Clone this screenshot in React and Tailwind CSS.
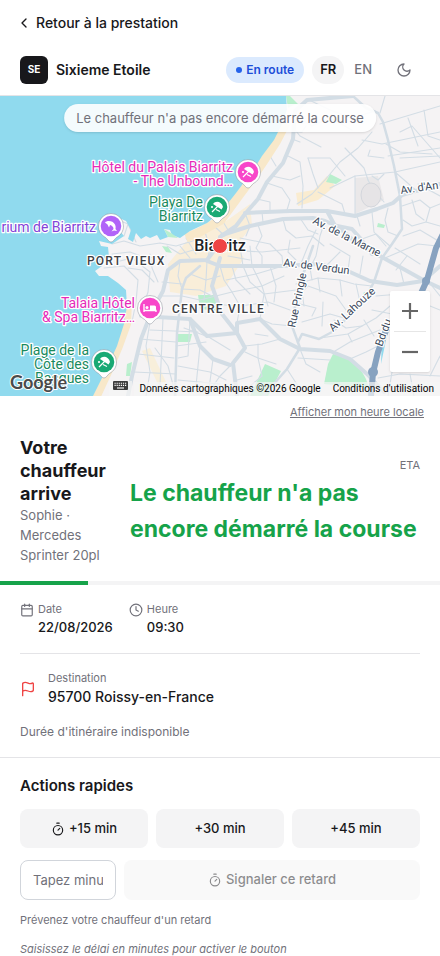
import React, { useState } from 'react';
import { Calendar, ChevronLeft, Clock, Flag, Timer } from 'lucide-react';

const LANGS = ['FR', 'EN'];
const QUICK_DELAYS = [15, 30, 45];

// Street network, drawn on a 440 x 300 canvas
const MINOR_STREETS = [
  // north-east
  'M307 3 L330 14 L352 22 L375 15', 'M385 0 L380 17', 'M380 28 L440 10', 'M372 36 L358 52 L340 66 L325 84 L312 98 L297 108',
  'M292 30 L300 40 L321 51', 'M296 20 L312 30 L330 22 L352 34', 'M345 52 L364 72 L368 84', 'M308 62 L330 62 L345 80',
  'M308 62 L313 78 L318 92', 'M288 60 L300 66 L303 90 L302 112', 'M330 92 L355 80 L395 76 L440 66', 'M355 80 L355 118',
  'M318 96 L342 108 L345 118', 'M362 44 L382 48 L440 36', 'M386 48 L400 56 L432 58', 'M400 36 L412 30 L440 62', 'M408 22 L418 50',
  'M388 60 L440 52', 'M395 76 L418 96', 'M368 84 L372 92 L384 106', 'M372 80 L378 84 L384 78', 'M400 62 L440 60', 'M424 14 L428 40 L440 44',
  'M267 87 L282 92 L290 104 L287 114', 'M272 80 L290 84 L300 80', 'M257 103 L270 106 L270 115', 'M276 70 L270 60 L276 50', 'M292 43 L300 46', 'M293 36 L302 36 L306 30',
  'M402 110 L420 104 L430 112 L426 126 L412 130 L403 124', 'M412 104 L416 118 L424 124', 'M430 112 L440 108', 'M426 126 L440 130', 'M403 140 L420 134 L440 146',
  'M388 112 L385 124 L388 136 L398 140', 'M372 116 L374 136 L386 150', 'M357 120 L360 130', 'M418 88 L440 100', 'M370 54 L368 60 L384 62',
  // centre
  'M245 117 L250 130 L246 140', 'M262 116 L263 126', 'M283 123 L286 134 L296 142 L312 140 L324 150', 'M258 129 L262 140 L256 152 L262 160 L262 170',
  'M240 142 L270 148 L282 160 L283 170', 'M300 122 L308 134 L318 138', 'M316 134 L308 150 L300 170', 'M324 128 L320 140 L316 160 L310 172',
  'M290 144 L288 156 L296 164', 'M225 154 L262 156 L300 152', 'M240 150 L243 170', 'M250 150 L252 170', 'M228 160 L250 164',
  'M330 148 L350 160 L348 174', 'M340 156 L326 170', 'M362 143 L376 138 L390 150', 'M363 160 L360 178', 'M400 172 L404 188',
  'M385 162 L418 148 L437 150', 'M395 152 L420 168', 'M407 160 L396 174',
  // left peninsula and port vieux
  'M112 148 L124 145 L140 150 L160 147 L176 150 L196 144', 'M112 158 L130 156 L146 162 L166 160', 'M104 172 L124 170 L138 184 L136 206 L132 226',
  'M116 166 L132 162 L150 176 L148 196 L142 214', 'M128 128 L124 140', 'M118 124 L128 128 L136 146', 'M150 158 L152 172 L158 186', 'M128 172 L142 174 L154 186',
  'M180 150 L190 162', 'M167 150 L180 158 L200 152', 'M186 142 L196 158', 'M205 136 L210 152 L207 165', 'M196 144 L216 152', 'M225 140 L214 130', 'M228 134 L222 124',
  'M160 200 L182 200 L200 204 L232 196', 'M180 165 L178 180 L182 193', 'M190 178 L206 184 L220 180', 'M207 165 L206 184 L204 204', 'M182 193 L200 194 L212 200', 'M162 186 L182 188',
  'M220 170 L224 184 L232 196 L240 210 L237 227', 'M232 170 L236 184 L250 198', 'M243 170 L250 186 L264 198 L260 223', 'M226 184 L256 178 L283 170', 'M232 196 L262 190 L284 180',
  'M252 170 L262 190 L268 210', 'M270 170 L276 190 L274 206', 'M210 208 L240 210 L268 206 L290 214', 'M264 198 L296 194',
  'M296 188 L318 182 L340 184 L342 200', 'M318 182 L320 196', 'M310 172 L312 184', 'M304 210 L302 196 L308 190 L336 200 L346 214', 'M323 206 L322 230',
  'M300 208 L316 212 L312 220', 'M340 184 L354 188 L372 190', 'M356 188 L360 206', 'M302 226 L330 218 L344 222',
  // south
  'M150 226 L146 250 L150 276 L146 300', 'M140 243 L176 246', 'M138 258 L174 262', 'M134 276 L176 278', 'M150 234 L198 236', 'M163 222 L160 290', 'M190 223 L188 260 L178 262',
  'M176 250 L206 246', 'M178 270 L210 276 L226 284', 'M200 250 L196 290', 'M178 284 L220 288', 'M213 263 L208 300', 'M155 252 L168 270 L176 300', 'M184 232 L206 240',
  'M207 240 L230 254', 'M245 250 L262 248 L280 243', 'M245 256 L258 262 L262 280', 'M258 248 L258 262 L276 268', 'M262 280 L250 290 L248 300', 'M233 267 L220 280 L206 300', 'M237 284 L252 280',
  'M260 223 L272 228 L292 230', 'M255 238 L268 240', 'M300 253 L306 268 L320 276', 'M320 242 L348 238 L376 222 L390 210', 'M335 255 L350 246 L380 234', 'M348 238 L352 246',
  'M350 263 L366 256 L378 250', 'M364 224 L374 240', 'M372 214 L392 218', 'M376 200 L400 198', 'M287 273 L298 290 L316 296', 'M298 262 L330 264',
  'M378 282 L400 278 L440 280', 'M392 276 L388 300', 'M410 278 L414 300', 'M440 260 L430 280', 'M432 190 L440 200', 'M430 210 L440 214', 'M334 224 L346 232 L362 230',
];

const MAIN_STREETS = [
  'M353 0 L366 12 L378 17 L383 26 L388 44 L394 70 L400 100 L402 133 L392 148 L382 162 L374 186 L362 208 L332 236 L319 243 L302 238 L298 246',
  'M313 150 L304 176 L296 204 L292 230 L300 252 L287 273 L263 300',
  'M182 193 L177 237 L175 300',
  'M200 170 L186 182 L182 193',
];

const ARTERIES = [
  'M353 0 L330 2 L307 4 L295 15 L293 43 L283 67 L267 86 L258 103 L245 118 L236 130 L220 141',
  'M245 117 L290 115 L327 115 L355 120 L377 113 L393 107 L402 99 L440 88',
  'M222 139 L250 130 L283 123 L313 122 L325 125 L337 130 L352 133 L360 142 L372 158',
  'M327 115 L334 128',
  'M337 130 L360 150 L380 160 L407 175 L425 185 L440 192',
  'M207 165 L220 170 L283 170 L318 168 L350 176 L370 185 L397 189 L423 185 L440 170',
  'M128 300 L132 280 L141 243 L151 217 L163 195 L168 174 L180 165 L207 164 L216 152',
  'M141 220 L190 223 L207 240 L237 237 L237 227 L260 223 L280 243 L300 253 L330 255 L350 263 L367 278 L384 296',
  'M190 223 L200 250 L213 263 L230 269',
  'M220 162 L212 190 L222 218 L237 237 L245 252 L233 267 L237 300',
];

const HIGHWAY = 'M445 134 L436 152 L427 184 L418 204 L404 220 L386 234 L378 256 L373 277 L371 300';

function Pin({ x, y, color, children }) {
  return (
    <g transform={`translate(${x} ${y})`}>
      <path
        d="M0 16 C-2 16 -3.500 13.200 -5.500 11.400 C-10 9 -12.500 5 -12.500 0 A12.500 12.500 0 0 1 12.500 0 C12.500 5 10 9 5.500 11.400 C3.500 13.200 2 16 0 16Z"
        fill="#fff"
        stroke="#6b7280"
        strokeOpacity="0.5"
        strokeWidth="0.8"
      />
      <circle r="10.300" fill={color} />
      {children}
    </g>
  );
}

function BeachIcon() {
  return (
    <g>
      <path d="M-4 -3 C-1 -7 5 -5 6 0 L4.500 2.500 L-4 -3Z" fill="#fff" />
      <path d="M1 -1 L-5 5 M-1 2.500 L3 4.500" stroke="#fff" strokeWidth="1.200" />
      <circle cx="-5" cy="0" r="1.100" fill="#fff" />
    </g>
  );
}

// Older, rounder crescent than the one the icon set ships now
function MoonIcon() {
  return (
    <svg width="16" height="16" viewBox="0 0 24 24" fill="none" stroke="currentColor" strokeWidth="2" strokeLinecap="round" strokeLinejoin="round" aria-hidden="true">
      <path d="M12 3a6 6 0 0 0 9 9 9 9 0 1 1-9-9Z" />
    </svg>
  );
}

function Label({ x, y, lines, color, anchor = 'end' }) {
  return (
    <text
      textAnchor={anchor}
      fill={color}
      stroke="#fff"
      strokeWidth="2.500"
      strokeLinejoin="round"
      paintOrder="stroke"
      className="font-[Roboto,sans-serif] text-[14px]"
    >
      {lines.map((line, i) => (
        <tspan key={line} x={x} y={y + i * 14}>{line}</tspan>
      ))}
    </text>
  );
}

function StreetName({ x, y, angle, children }) {
  return (
    <text
      transform={`translate(${x} ${y}) rotate(${angle})`}
      fill="#3c4a5c"
      stroke="#fff"
      strokeWidth="2.500"
      strokeLinejoin="round"
      paintOrder="stroke"
      className="font-[Roboto,sans-serif] text-[11px]"
    >
      {children}
    </text>
  );
}

function District({ x, y, children }) {
  return (
    <text
      x={x}
      y={y}
      fill="#3f4145"
      stroke="#fff"
      strokeWidth="2.500"
      strokeLinejoin="round"
      paintOrder="stroke"
      className="font-[Roboto,sans-serif] text-[12px] font-medium tracking-widest"
    >
      {children}
    </text>
  );
}

function MapDrawing() {
  return (
    <svg viewBox="0 0 440 300" preserveAspectRatio="xMidYMid slice" className="absolute inset-0 h-full w-full" role="img" aria-label="Carte de Biarritz">
      <rect width="440" height="300" fill="#f5f3f4" />

      {/* Built-up areas */}
      <g fill="#faecd0">
        <path d="M168 168 L186 146 L222 128 L250 108 L252 130 L236 150 L244 162 L226 190 L196 200 L170 196Z" opacity="0.75" />
        <path d="M296 97 L314 94 L327 80 L335 90 L318 104 L298 110Z" />
        <path d="M142 255 L150 252 L166 286 L158 288Z" opacity="0.7" />
      </g>
      <path d="M355 82 L378 80 L384 104 L355 118Z" fill="#eae8e9" />

      {/* Parks */}
      <g fill="#b9efcd">
        <path d="M286 0 L290 0 L300 10 L296 8 L288 12Z" />
        <path d="M330 78 L342 84 L336 88 L326 86Z" />
        <path d="M198 199 L218 199 L218 215 L200 213Z" />
        <path d="M178 238 L192 238 L190 246 L178 246Z" />
        <path d="M265 268 L281 275 L268 300 L250 300Z" />
        <path d="M333 258 C350 260 366 276 368 290 L368 292 L324 288 L328 268Z" />
        <path d="M378 127 L385 129 L384 132 L377 131Z" />
        <path d="M364 196 L369 197 L366 206 L361 204Z" />
        <path d="M127 268 L132 266 L130 280 L126 280Z" />
        <path d="M162 150 L168 151 L172 157 L166 156Z" />
      </g>

      <g fill="none" stroke="#d3dde5" strokeLinecap="round" strokeLinejoin="round">
        <g strokeWidth="1.100">
          {MINOR_STREETS.map((d) => <path key={d} d={d} />)}
        </g>
        <g strokeWidth="2.500">
          {MAIN_STREETS.map((d) => <path key={d} d={d} />)}
        </g>
        <g strokeWidth="4">
          {ARTERIES.map((d) => <path key={d} d={d} />)}
        </g>
      </g>
      <ellipse cx="371" cy="99" rx="10" ry="12" fill="#e6e4e6" stroke="#d3d6dc" />
      <path d="M382 238 L392 226 L386 244 L381 268Z" fill="#90daee" />
      <path d={HIGHWAY} fill="none" stroke="#87a2c0" strokeWidth="6" strokeLinejoin="round" />
      <circle cx="426" cy="185" r="4" fill="#87a2c0" />
      <circle cx="373" cy="276" r="5" fill="#87a2c0" />

      {/* Ocean, with the sand strip as its outline */}
      <path
        d="M286 27 L276 46 L263 66 L255 78 L240 98 L221 124 L200 136 L186 142"
        fill="none"
        stroke="#f8e8c9"
        strokeWidth="9"
      />
      <path d="M128 205 L127 228 L119 250 L109 274 L96 302" fill="none" stroke="#f8e8c9" strokeWidth="8" />
      <path
        d="M0 0 L286 0 L287 14 L281 30 L274 44 L262 60 L254 73 L236 97 L221 116 L207 127 L190 135 L180 142 L172 139 L170 134 L164 133 L168 141 L160 144 L157 139 L150 142 L146 140 L141 143 L136 137 L133 146 L128 143 L131 134 L126 125 L119 122 L118 133 L124 140 L112 148 L99 145 L101 150 L108 151 L109 161 L100 164 L102 170 L95 175 L99 180 L108 180 L118 187 L126 194 L127 210 L124 228 L117 250 L106 274 L93 300 L0 300Z"
        fill="#90daee"
      />
      <path d="M164 133 L171 137 L178 142 L168 141Z" fill="#b9efcd" />

      <StreetName x="401" y="98" angle="-8">Av. d'An</StreetName>
      <StreetName x="312" y="127" angle="27">Av. de la Marne</StreetName>
      <StreetName x="283" y="170" angle="7">Av. de Verdun</StreetName>
      <StreetName x="295" y="232" angle="-78">Rue Pringle</StreetName>
      <StreetName x="333" y="236" angle="-43">Av. Lahouze</StreetName>
      <StreetName x="382" y="251" angle="-70">Bd du</StreetName>

      <Label x="233" y={76} color="#e52bb9" lines={['Hôtel du Palais Biarritz', '- The Unbound…']} />
      <Label x="203" y={111} color="#188a5e" lines={['Playa De', 'Biarritz']} />
      <Label x="96" y={136} color="#8344d8" lines={['rium de Biarritz']} />
      <Label x="135" y={212} color="#e52bb9" lines={['Talaia Hôtel', '& Spa Biarritz…']} />
      <Label x="89" y={259} color="#188a5e" lines={['Plage de la', 'Côte des', 'Basques']} />

      <District x="87" y="169">PORT VIEUX</District>
      <District x="172" y="217">CENTRE VILLE</District>

      <Pin x="248" y="76" color="#f846c9"><BeachIcon /></Pin>
      <Pin x="217" y="111" color="#19a974"><BeachIcon /></Pin>
      <Pin x="104" y="266" color="#19a974"><BeachIcon /></Pin>
      <Pin x="111" y="130" color="#b163f8">
        <path d="M-6 -3.500 C-4 -6 2 -5.500 4 -1.500 C5 0.500 4.500 2 4.500 3 L6 5 L3 4.500 L0.500 5.500 L2.500 3 C2.500 1 1 -0.500 -1 -1 L-2 1.500 L-3.500 -1.500Z" fill="#fff" />
      </Pin>
      <Pin x="150" y="212" color="#f846c9">
        <path d="M-6 -4 V4 M-6 2.500 H6 V4" fill="none" stroke="#fff" strokeWidth="1.300" />
        <path d="M0 -2.500 H4.500 Q6 -2.500 6 -1 V2 H0Z" fill="#fff" />
        <circle cx="-3" cy="-0.500" r="1.500" fill="#fff" />
      </Pin>

      <text
        x="220"
        y="155"
        textAnchor="middle"
        fill="#202124"
        stroke="#fff"
        strokeWidth="2.500"
        paintOrder="stroke"
        className="font-[Roboto,sans-serif] text-[16px] font-medium"
      >
        Biarritz
      </text>
      <circle cx="220" cy="150" r="7.500" fill="#ef4444" stroke="#fff" strokeWidth="1" />
    </svg>
  );
}

function KeyboardIcon() {
  return (
    <svg width="15" height="9" viewBox="0 0 15 9" aria-hidden="true">
      <rect width="15" height="9" rx="1" fill="#3c3c3c" />
      <path d="M1.500 2.200 H13.500 M1.500 4.400 H13.500" stroke="#fff" strokeWidth="1.100" strokeDasharray="1.200 0.900" />
      <path d="M4 7 H11" stroke="#fff" strokeWidth="1.100" />
    </svg>
  );
}

function MapView() {
  return (
    <section className="relative h-[300px] overflow-hidden bg-[#90daee]">
      <MapDrawing />

      <p className="absolute left-1/2 top-2 -translate-x-1/2 whitespace-nowrap rounded-full bg-white/90 px-3 py-1 text-[13px] leading-5 text-[#71717a] shadow-sm">
        Le chauffeur n'a pas encore démarré la course
      </p>

      {/* Zoom controls */}
      <div className="absolute bottom-6 right-2.5 flex w-10 flex-col items-center rounded-xs bg-white shadow">
        <button type="button" aria-label="Zoom avant" className="flex h-10 w-10 items-center justify-center">
          <svg width="18" height="18" viewBox="0 0 18 18"><path d="M9 1 V17 M1 9 H17" stroke="#666" strokeWidth="2.200" /></svg>
        </button>
        <span className="h-px w-8 bg-[#e6e6e6]" />
        <button type="button" aria-label="Zoom arrière" className="flex h-10 w-10 items-center justify-center">
          <svg width="18" height="18" viewBox="0 0 18 18"><path d="M1 9 H17" stroke="#666" strokeWidth="2.200" /></svg>
        </button>
      </div>

      <span className="absolute bottom-0.5 left-2.5 font-[Lato,sans-serif] text-[18px] font-bold leading-6 text-[#4a4a4a] [-webkit-text-stroke:2px_white] [paint-order:stroke_fill]">
        Google
      </span>

      <div className="absolute bottom-0 right-0 flex h-3.5 items-center font-[Roboto,sans-serif] text-[10px] leading-[14px] text-black">
        <button type="button" aria-label="Raccourcis clavier" className="mr-0.5 flex h-4 items-start bg-[#f5f5f5]/70 px-1">
          <KeyboardIcon />
        </button>
        <span className="bg-[#f5f5f5]/70 px-1.5">Données cartographiques ©2026 Google</span>
        <a href="#conditions" className="bg-[#f5f5f5]/70 px-1.5">Conditions d'utilisation</a>
      </div>
    </section>
  );
}

function Header({ lang, setLang }) {
  return (
    <header className="border-b border-[#e4e4e7]">
      <div className="flex h-[46px] items-center px-4">
        <a href="#prestation" className="flex items-center gap-1 text-[14px] font-medium leading-5">
          <ChevronLeft size={16} />
          Retour à la prestation
        </a>
      </div>
      <div className="flex h-[49px] items-center px-5 pb-0.5">
        <span className="flex h-7 w-7 items-center justify-center rounded-md bg-[#18181b] text-[10px] font-bold text-white">SE</span>
        <span className="ml-2 text-[14px] font-semibold leading-5">Sixieme Etoile</span>
        <span className="ml-auto flex h-[26px] items-center gap-1 rounded-full bg-[#dbeafe] px-2.5 text-[12px] font-semibold text-[#1d4ed8]">
          <span className="h-1.5 w-1.5 rounded-full bg-[#2563eb]" />
          En route
        </span>
        <div className="ml-2 flex gap-0.5">
          {LANGS.map((code) => (
            <button
              key={code}
              type="button"
              onClick={() => setLang(code)}
              className={`h-7 rounded-full px-2 text-[13px] ${
                lang === code ? 'bg-[#f4f4f5] font-semibold text-[#18181b]' : 'font-medium text-[#71717a]'
              }`}
            >
              {code}
            </button>
          ))}
        </div>
        <button type="button" aria-label="Mode sombre" className="ml-2 flex h-8 w-8 items-center justify-center text-[#71717a]">
          <MoonIcon />
        </button>
      </div>
    </header>
  );
}

export default function App() {
  const [lang, setLang] = useState('FR');
  const [minutes, setMinutes] = useState('');

  return (
    <main className="bg-white font-[Inter,sans-serif] text-[#18181b]">
      <Header lang={lang} setLang={setLang} />
      <MapView />

      <div className="flex h-8 items-center justify-end px-4">
        <button type="button" className="text-[11px] leading-4 text-[#71717a] underline">Afficher mon heure locale</button>
      </div>

      {/* Driver and ETA */}
      <section className="flex items-center gap-3.5 px-5 pb-4 pt-2">
        <div className="w-24 shrink-0">
          <h1 className="text-[18px] font-bold leading-[23px]">Votre chauffeur arrive</h1>
          <p className="text-[13px] leading-5 text-[#71717a]">Sophie · Mercedes Sprinter 20pl</p>
        </div>
        <div className="flex-1">
          <p className="text-right text-[11px] leading-5 text-[#71717a]">ETA</p>
          <p className="text-[23px] font-bold leading-9 text-[#16a34a]">Le chauffeur n'a pas encore démarré la course</p>
        </div>
      </section>
      <div className="h-1 bg-[#f4f4f5]">
        <div className="h-full w-1/5 bg-[#16a34a]" />
      </div>

      <section className="px-5">
        <dl className="flex gap-4 border-b border-[#e4e4e7] pb-4 pt-4">
          <div className="flex gap-1">
            <Calendar size={14} className="mt-0.5 text-[#71717a]" />
            <div>
              <dt className="text-[11px] leading-4 text-[#71717a]">Date</dt>
              <dd className="text-[13px] font-medium leading-5">22/08/2026</dd>
            </div>
          </div>
          <div className="flex gap-1">
            <Clock size={14} className="mt-0.5 text-[#71717a]" />
            <div>
              <dt className="text-[11px] leading-4 text-[#71717a]">Heure</dt>
              <dd className="text-[13px] font-medium leading-5">09:30</dd>
            </div>
          </div>
        </dl>
        <div className="flex items-center gap-3 pt-4">
          <Flag size={16} className="text-[#ef4444]" />
          <div>
            <p className="text-[11px] leading-4 text-[#71717a]">Destination</p>
            <p className="text-[14px] font-medium leading-[21px]">95700 Roissy-en-France</p>
          </div>
        </div>
        <p className="pb-4 pt-4 text-[12px] leading-[18px] text-[#71717a]">Durée d'itinéraire indisponible</p>
      </section>

      <section className="border-t border-[#e4e4e7] px-5 pt-4">
        <h2 className="text-[15px] font-semibold leading-[23px]">Actions rapides</h2>
        <div className="mt-3 grid grid-cols-3 gap-2">
          {QUICK_DELAYS.map((delay, idx) => (
            <button
              key={delay}
              type="button"
              onClick={() => setMinutes(String(delay))}
              className="flex h-[39px] items-center justify-center gap-1 rounded-lg bg-[#f4f4f5] text-[13px] font-medium"
            >
              {idx === 0 && <Timer size={14} />}
              +{delay} min
            </button>
          ))}
        </div>
        <div className="mt-3 flex gap-2">
          <input
            type="text"
            inputMode="numeric"
            aria-label="Retard en minutes"
            placeholder="Tapez minutes"
            value={minutes}
            onChange={(e) => setMinutes(e.target.value)}
            className="h-10 w-24 rounded-lg border border-[#d1d5db] bg-white px-3 text-[13px] placeholder:text-[#71717a]"
          />
          <button
            type="button"
            disabled={!minutes}
            className="flex h-10 flex-1 items-center justify-center gap-1 rounded-lg bg-[#f4f4f5] text-[13px] font-medium disabled:opacity-50"
          >
            <Timer size={14} />
            Signaler ce retard
          </button>
        </div>
        <p className="mt-3 text-[11px] leading-[17px] text-[#71717a]">Prévenez votre chauffeur d'un retard</p>
        <p className="mt-3 text-[11px] italic leading-[17px] text-[#71717a]">Saisissez le délai en minutes pour activer le bouton</p>
      </section>
    </main>
  );
}
